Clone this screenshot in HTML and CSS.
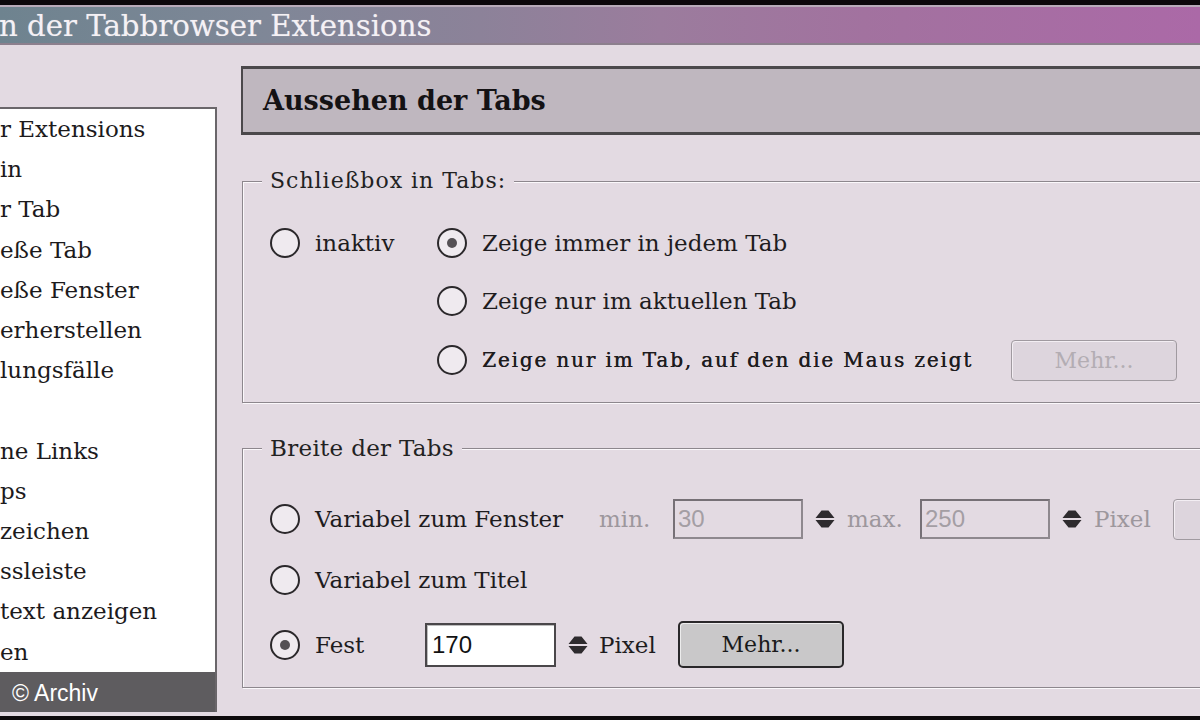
FILE: index.html
```html
<!DOCTYPE html>
<html lang="de">
<head>
<meta charset="utf-8">
<title>Tabbrowser Extensions</title>
<link rel="stylesheet" href="styles.css">
</head>
<body>
<div class="screen">
  <div class="topline"></div>
  <div class="titlebar"><span class="title">n der Tabbrowser Extensions</span></div>
  <div class="main">
    <div class="leftcol">
      <ul class="list">
        <li>r Extensions</li>
        <li>in</li>
        <li>r Tab</li>
        <li>eße Tab</li>
        <li>eße Fenster</li>
        <li>erherstellen</li>
        <li>lungsfälle</li>
        <li>&nbsp;</li>
        <li>ne Links</li>
        <li>ps</li>
        <li>zeichen</li>
        <li>ssleiste</li>
        <li>text anzeigen</li>
        <li>en</li>
      </ul>
      <div class="credit">© Archiv</div>
    </div>
    <div class="rightcol">
      <div class="pagehead">Aussehen der Tabs</div>

      <fieldset class="group g1">
        <legend>Schließbox in Tabs:</legend>
        <div class="g1grid">
          <div class="opt"><span class="radio"></span><span class="lbl">inaktiv</span></div>
          <div class="opt"><span class="radio on"></span><span class="lbl">Zeige immer in jedem Tab</span></div>
          <div class="opt col2"><span class="radio"></span><span class="lbl">Zeige nur im aktuellen Tab</span></div>
          <div class="opt col2"><span class="radio"></span><span class="lbl odd">Zeige nur im Tab, auf den die Maus zeigt</span><button class="btn dis push">Mehr...</button></div>
        </div>
      </fieldset>

      <fieldset class="group g2">
        <legend>Breite der Tabs</legend>
        <div class="row r1">
          <span class="radio"></span><span class="lbl w-fenster">Variabel zum Fenster</span>
          <span class="grey w-min">min.</span>
          <input class="field" type="text" value="30" readonly>
          <svg class="spin" viewBox="0 0 20 20" width="20" height="20"><path d="M6.5 1.5 H13.5 L19.5 9 H0.5 Z M0.5 11 H19.5 L13.5 18.5 H6.5 Z" fill="#2e2b2e"/></svg>
          <span class="grey w-max">max.</span>
          <input class="field" type="text" value="250" readonly>
          <svg class="spin" viewBox="0 0 20 20" width="20" height="20"><path d="M6.5 1.5 H13.5 L19.5 9 H0.5 Z M0.5 11 H19.5 L13.5 18.5 H6.5 Z" fill="#2e2b2e"/></svg>
          <span class="grey w-pixel">Pixel</span>
          <button class="btn dis edge">Mehr...</button>
        </div>
        <div class="row r2">
          <span class="radio"></span><span class="lbl">Variabel zum Titel</span>
        </div>
        <div class="row r3">
          <span class="radio on"></span><span class="lbl w-fest">Fest</span>
          <input class="field white" type="text" value="170" readonly>
          <svg class="spin" viewBox="0 0 20 20" width="20" height="20"><path d="M6.5 1.5 H13.5 L19.5 9 H0.5 Z M0.5 11 H19.5 L13.5 18.5 H6.5 Z" fill="#2e2b2e"/></svg>
          <span class="lbl w-pixel2">Pixel</span>
          <button class="btn">Mehr...</button>
        </div>
      </fieldset>
    </div>
  </div>
  <div class="bottomline"></div>
</div>
</body>
</html>
```
FILE: styles.css
```css
html, body {
  margin: 0;
  padding: 0;
}
body {
  width: 1200px;
  height: 720px;
  overflow: hidden;
  background: #000;
  font-family: "DejaVu Serif", "Liberation Serif", serif;
}
.screen {
  width: 1200px;
  height: 720px;
  display: flex;
  flex-direction: column;
  background: #e3dae2;
  overflow: hidden;
}
.topline {
  height: 5px;
  flex: none;
  background: #0c070b;
}
.titlebar {
  height: 40px;
  flex: none;
  box-sizing: border-box;
  border-top: 2px solid #b8aab9;
  border-bottom: 2px solid #8c7f8d;
  background: linear-gradient(90deg, #6e838f 0%, #7f8797 22%, #8c8299 40%, #9b7c9d 55%, #a2729f 72%, #ab69a7 100%);
  display: flex;
  align-items: center;
  color: #f5f1f5;
  font-size: 29.2px;
  white-space: nowrap;
}
.title {
  margin-left: -1px;
  margin-top: 2px;
  text-shadow: 0 0 1px rgba(255,255,255,0.4);
}
.main {
  flex: 1;
  min-height: 0;
  display: flex;
  gap: 24px;
}
.leftcol {
  width: 217px;
  flex: none;
  padding-top: 62px;
  display: flex;
  flex-direction: column;
}
.list {
  height: 565px;
  box-sizing: border-box;
  margin: 0;
  padding: 0;
  list-style: none;
  background: #fff;
  border-top: 2px solid #6a666a;
  border-right: 2px solid #6a666a;
  font-size: 23px;
  line-height: 40.2px;
  color: #1c1a1c;
  white-space: nowrap;
  overflow: hidden;
}
.credit {
  height: 40px;
  box-sizing: border-box;
  background: #5e5c5f;
  border-right: 2px solid #6a666a;
  color: #fff;
  font-family: "Liberation Sans", Arial, sans-serif;
  font-size: 23px;
  line-height: 42px;
  padding-left: 12px;
}
.rightcol {
  width: 1000px;
  flex: none;
  display: flex;
  flex-direction: column;
}
.pagehead {
  margin-top: 21px;
  height: 69px;
  box-sizing: border-box;
  border-top: 3px solid #4b484b;
  border-bottom: 3px solid #4b484b;
  border-left: 2px solid #4b484b;
  background: #bfb7bf;
  padding-left: 20px;
  line-height: 64px;
  font-size: 27px;
  font-weight: bold;
  color: #141214;
}
.group {
  margin: 33px 0 0 1px;
  padding: 29px 63px 21px 27px;
  border: 1px solid #8d878d;
  box-shadow: inset 1px 1px 0 #fbf8fb, 1px 1px 0 #fbf8fb;
  min-width: 0;
}
.group legend {
  margin-left: -8px;
  padding: 0 8px;
  font-size: 22px;
  letter-spacing: 1px;
  line-height: 26px;
  color: #222;
  background: #e3dae2;
}
.g1grid {
  display: grid;
  grid-template-columns: 167px 1fr;
  grid-template-rows: 40px 40px 42px;
  row-gap: 18px;
}
.opt {
  display: flex;
  align-items: center;
}
.col2 {
  grid-column: 2;
}
.radio {
  width: 30px;
  height: 30px;
  flex: none;
  box-sizing: border-box;
  border-radius: 50%;
  border: 2.5px solid #2b282b;
  background: #efeaef;
  display: flex;
  align-items: center;
  justify-content: center;
  margin-right: 15px;
}
.radio.on::after {
  content: "";
  width: 10px;
  height: 10px;
  border-radius: 50%;
  background: #555155;
}
.lbl {
  flex: none;
  font-size: 23px;
  color: #1e1c1e;
  white-space: nowrap;
}
.lbl.odd {
  font-size: 20px;
  letter-spacing: 1.85px;
  text-shadow: 0.4px 0 0 #1e1c1e;
}
.push {
  margin-left: auto;
}
.btn {
  width: 166px;
  height: 47px;
  flex: none;
  box-sizing: border-box;
  border: 2px solid #2a282a;
  border-radius: 5px;
  background: #c9c8c9;
  box-shadow: inset 1px 1px 0 #ececec;
  font-family: "DejaVu Serif", serif;
  font-size: 22px;
  color: #1a1a1a;
  padding: 0;
}
.btn.dis {
  height: 41px;
  border: 1px solid #a09aa0;
  border-radius: 4px;
  background: #ddd5dd;
  box-shadow: inset 1px 1px 0 #f3eef3;
  color: #b3adb3;
}
.btn.edge {
  text-align: right;
  padding-right: 40px;
}
.g2 {
  margin-top: 32px;
  padding: 38px 0 19px 27px;
}
.g2 legend {
  font-size: 23px;
  letter-spacing: 0.3px;
}
.row {
  display: flex;
  align-items: center;
  height: 40px;
}
.r2 {
  margin-top: 21px;
}
.r3 {
  margin-top: 21px;
  height: 47px;
}
.grey {
  flex: none;
  font-size: 23px;
  color: #9d979d;
  white-space: nowrap;
}
.w-fenster { width: 284px; }
.w-min { width: 74px; }
.w-max { width: 73px; margin-left: 12px; }
.w-pixel { width: 79px; margin-left: 12px; }
.w-fest { width: 110px; }
.w-pixel2 { width: 79px; margin-left: 11px; }
.field {
  width: 130px;
  height: 40px;
  flex: none;
  box-sizing: border-box;
  margin: 0;
  border: 2px solid #767076;
  border-right-color: #8e888e;
  border-bottom-color: #8e888e;
  background: transparent;
  padding: 0 3px;
  font-family: "Liberation Sans", Arial, sans-serif;
  font-size: 24px;
  color: #a49ea4;
  outline: none;
}
.field.white {
  width: 131px;
  height: 44px;
  background: #fff;
  border: 2px solid #4a474a;
  box-shadow: inset 1px 1px 0 #bdbdbd;
  color: #121212;
  padding: 0 5px;
}
.spin {
  flex: none;
  margin-left: 12px;
  display: block;
}
.bottomline {
  height: 4px;
  flex: none;
  background: #0d0a0c;
}
```
